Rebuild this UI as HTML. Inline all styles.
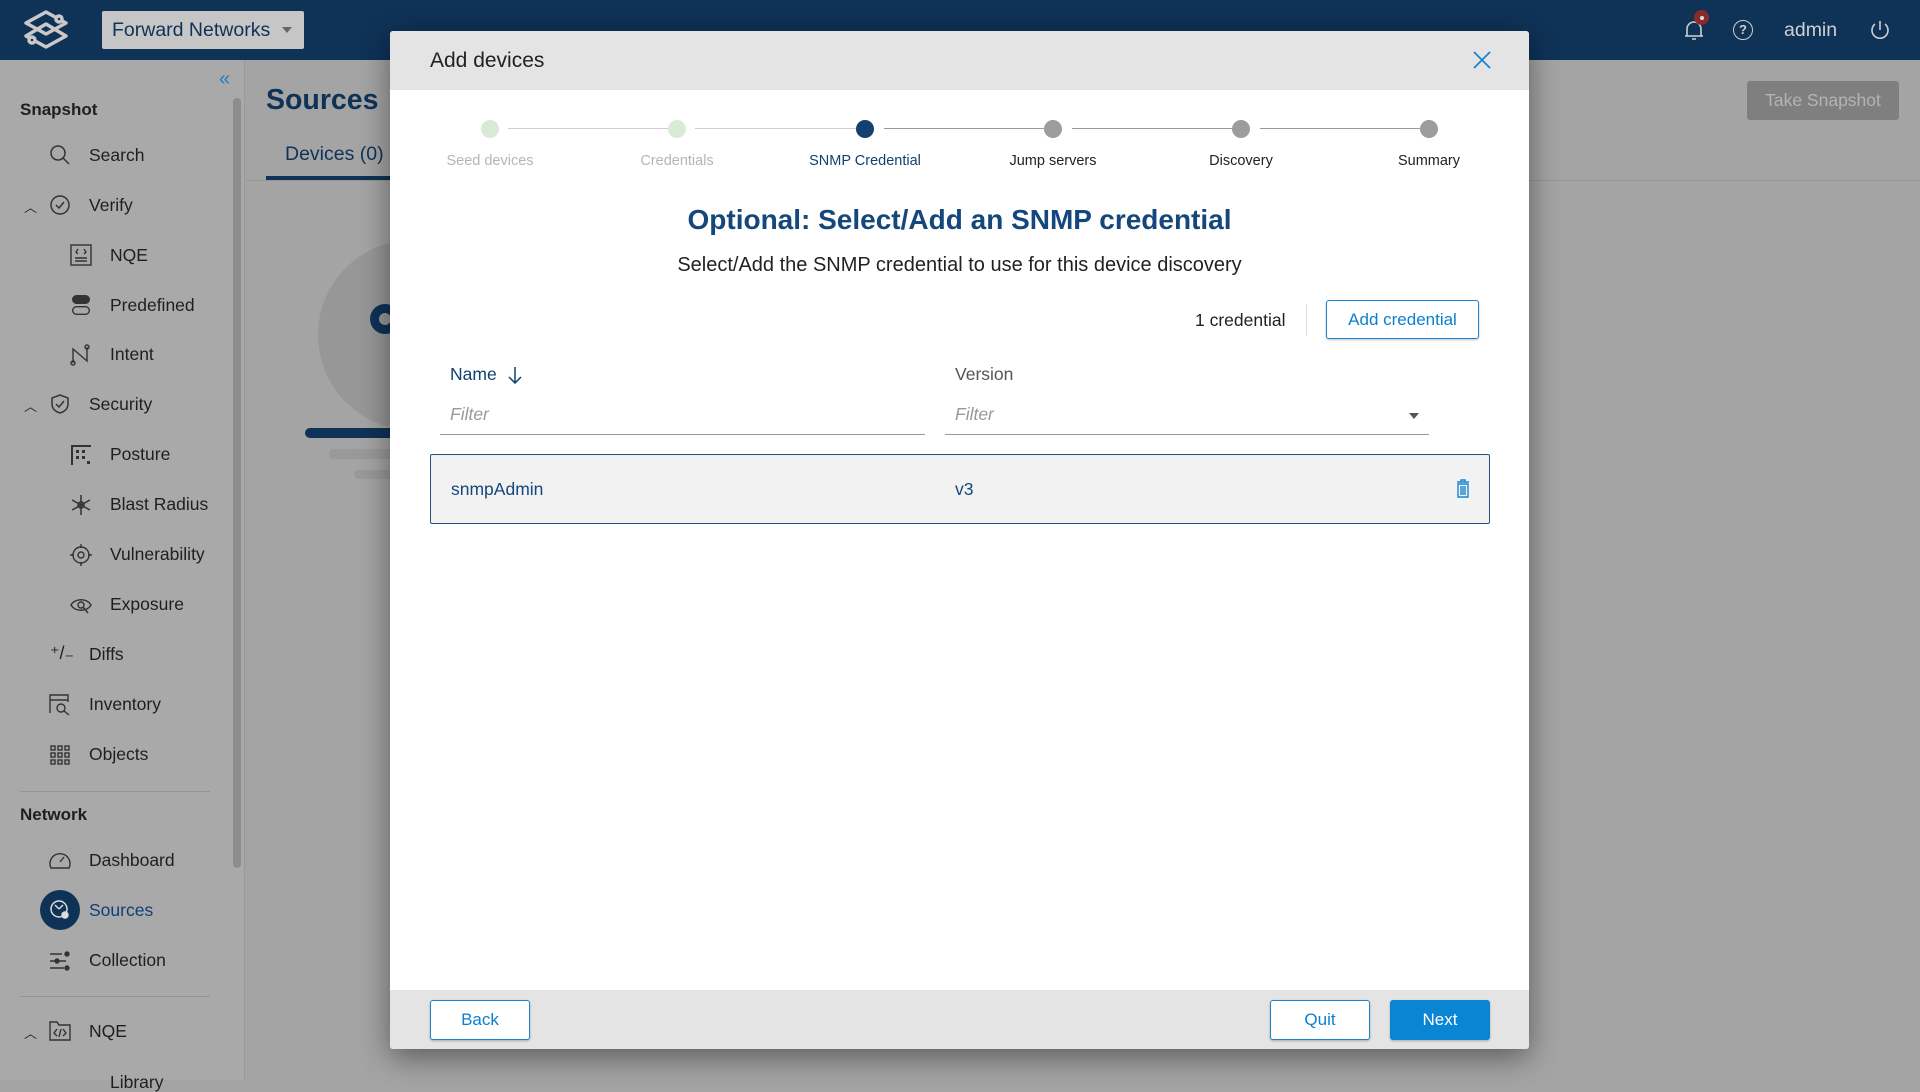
<!DOCTYPE html>
<html><head><meta charset="utf-8">
<style>
*{box-sizing:border-box;margin:0;padding:0}
body{width:1920px;height:1080px;overflow:hidden;font-family:"Liberation Sans",sans-serif;background:#a4a4a4;position:relative}
.abs{position:absolute}
#top{left:0;top:0;width:1920px;height:60px;background:#0f3257}
#side{left:0;top:60px;width:245px;height:1020px;background:#a9a9a9;border-right:1px solid #9a9a9a}
.si{position:absolute;font-size:17.5px;color:#1f1f1f;line-height:20px}
.hd{font-weight:bold;font-size:17px}
.ic{position:absolute;width:22px;height:22px}
.modal{left:390px;top:31px;width:1139px;height:1018px;background:#fff;border-radius:3px;box-shadow:0 8px 30px rgba(0,0,0,.45);overflow:hidden}
.step{position:absolute;top:89px;width:18px;height:18px;border-radius:50%}
.lbl{position:absolute;top:122px;font-size:14.5px;width:160px;text-align:center;margin-left:-80px}
.ln{position:absolute;top:97px;height:1px;background:#cfcfcf}
.btn{position:absolute;border:1px solid #1a84d0;border-radius:3px;background:#fff;color:#0b7fd0;font-size:17px;text-align:center;box-shadow:0 1px 2px rgba(0,0,0,.25)}
</style></head><body>
<div id="top" class="abs">
 <svg class="abs" style="left:20px;top:9px" width="52" height="42" viewBox="0 0 52 42" fill="none" stroke="#c9c9c9" stroke-width="3.5" stroke-linejoin="round">
  <path d="M26 3 L46 14 L26 25 L6 14 Z"/><path d="M26 15 L46 27 L26 38 L6 27 Z"/>
  <circle cx="39" cy="10" r="3" fill="#0f3257"/><circle cx="12" cy="31" r="3" fill="#0f3257"/>
 </svg>
 <div class="abs" style="left:102px;top:11px;width:202px;height:38px;background:#c6c6c6;border-radius:2px;color:#0f3257;font-size:19.5px;line-height:38px;padding-left:10px">Forward Networks<span style="position:absolute;right:12px;top:16px;border-left:5px solid transparent;border-right:5px solid transparent;border-top:6px solid #666"></span></div>
 <svg class="abs" style="left:1682px;top:17px" width="24" height="26" viewBox="0 0 24 26" fill="none" stroke="#cfcfcf" stroke-width="1.6"><path d="M5 19 V12 a7 7 0 0 1 14 0 V19 Z M3 19 H21 M10 22 H14"/></svg>
 <div class="abs" style="left:1694px;top:10px;width:15px;height:15px;border-radius:50%;background:#8a2a2a"><div style="width:4px;height:4px;background:#ddd;border-radius:50%;margin:5.5px auto"></div></div>
 <div class="abs" style="left:1733px;top:20px;width:20px;height:20px;border:1.6px solid #cfcfcf;border-radius:50%;color:#cfcfcf;font-size:13px;text-align:center;line-height:17px;font-weight:bold">?</div>
 <div class="abs" style="left:1784px;top:19px;color:#cfcfcf;font-size:19.5px">admin</div>
 <svg class="abs" style="left:1869px;top:19px" width="22" height="22" viewBox="0 0 22 22" fill="none" stroke="#cfcfcf" stroke-width="1.6"><path d="M11 2 V11"/><path d="M6 5 A8 8 0 1 0 16 5"/></svg>
</div>

<div id="side" class="abs">
 <div class="abs" style="left:219px;top:8px;color:#1f7fc6;font-size:20px">«</div>
 <div class="abs" style="left:233px;top:38px;width:8px;height:770px;background:#8d8d8d;border-radius:4px"></div>
 <div class="si hd" style="left:20px;top:40px">Snapshot</div>
 <div class="si" style="left:89px;top:85px">Search</div>
 <div class="si" style="left:89px;top:135px">Verify</div>
 <div class="si" style="left:110px;top:185px">NQE</div>
 <div class="si" style="left:110px;top:235px">Predefined</div>
 <div class="si" style="left:110px;top:284px">Intent</div>
 <div class="si" style="left:89px;top:334px">Security</div>
 <div class="si" style="left:110px;top:384px">Posture</div>
 <div class="si" style="left:110px;top:434px">Blast Radius</div>
 <div class="si" style="left:110px;top:484px">Vulnerability</div>
 <div class="si" style="left:110px;top:534px">Exposure</div>
 <div class="si" style="left:89px;top:584px">Diffs</div>
 <div class="si" style="left:89px;top:634px">Inventory</div>
 <div class="si" style="left:89px;top:684px">Objects</div>
 <div class="abs" style="left:20px;top:731px;width:190px;height:1px;background:#959595"></div>
 <div class="si hd" style="left:20px;top:745px">Network</div>
 <div class="si" style="left:89px;top:790px">Dashboard</div>
 <div class="abs" style="left:40px;top:830px;width:40px;height:40px;border-radius:50%;background:#0f3257"></div>
 <div class="si" style="left:89px;top:840px;color:#0f3f78">Sources</div>
 <div class="si" style="left:89px;top:890px">Collection</div>
 <div class="abs" style="left:20px;top:936px;width:190px;height:1px;background:#959595"></div>
 <div class="si" style="left:89px;top:961px">NQE</div>
 <div class="si" style="left:110px;top:1012px">Library</div>
 <div class="si" style="left:24px;top:138px;font-size:13px">︿</div>
 <div class="si" style="left:24px;top:337px;font-size:13px">︿</div>
 <div class="si" style="left:24px;top:964px;font-size:13px">︿</div>
 <svg class="ic" style="left:49px;top:84px" viewBox="0 0 22 22" fill="none" stroke="#333" stroke-width="1.5"><circle cx="9" cy="9" r="7"/><path d="M14 14 L20 20"/></svg>
 <svg class="ic" style="left:49px;top:134px" viewBox="0 0 22 22" fill="none" stroke="#333" stroke-width="1.5"><circle cx="11" cy="11" r="9"/><path d="M7 11 L10 14 L15 8"/></svg>
 <svg class="ic" style="left:70px;top:184px" viewBox="0 0 22 22" fill="none" stroke="#333" stroke-width="1.4"><rect x="1" y="1" width="20" height="20"/><path d="M5 14H17M5 17H17M8 5L6 8L8 10M14 5L16 8L14 10"/></svg>
 <svg class="ic" style="left:70px;top:234px" viewBox="0 0 22 22" fill="#333"><rect x="2" y="1" width="18" height="9" rx="4.5"/><rect x="2.7" y="12.7" width="16.6" height="7.6" rx="3.8" fill="none" stroke="#333" stroke-width="1.4"/></svg>
 <svg class="ic" style="left:70px;top:284px" viewBox="0 0 22 22" fill="none" stroke="#333" stroke-width="1.4"><path d="M3 19 V5 L17 17 V3"/><circle cx="3" cy="19" r="2"/><circle cx="17" cy="3" r="2"/></svg>
 <svg class="ic" style="left:49px;top:333px" viewBox="0 0 22 22" fill="none" stroke="#333" stroke-width="1.5"><path d="M11 2 L19 5 V11 C19 16 15 19 11 20 C7 19 3 16 3 11 V5 Z"/><path d="M7 11 L10 14 L15 8"/></svg>
 <svg class="ic" style="left:70px;top:384px" viewBox="0 0 22 22" fill="#333"><path d="M1 1h20v2H1zM1 1h2v20H1z"/><rect x="6" y="6" width="3" height="3"/><rect x="12" y="6" width="3" height="3"/><rect x="6" y="12" width="3" height="3"/><rect x="12" y="12" width="3" height="3"/><rect x="17" y="17" width="3" height="3"/></svg>
 <svg class="ic" style="left:70px;top:434px" viewBox="0 0 22 22" fill="none" stroke="#333" stroke-width="1.5"><path d="M11 1V21M2 6L20 16M2 16L20 6"/><circle cx="11" cy="11" r="3"/></svg>
 <svg class="ic" style="left:70px;top:484px" viewBox="0 0 22 22" fill="none" stroke="#333" stroke-width="1.4"><circle cx="11" cy="11" r="8"/><circle cx="11" cy="11" r="3"/><path d="M11 0V4M11 18V22M0 11H4M18 11H22"/></svg>
 <svg class="ic" style="left:70px;top:534px" viewBox="0 0 22 22" fill="none" stroke="#333" stroke-width="1.4"><path d="M1 11 C5 4 17 4 21 11 C17 18 5 18 1 11Z"/><circle cx="11" cy="11" r="3"/><path d="M13 13L18 19"/></svg>
 <div class="si" style="left:50px;top:583px;font-size:18px">⁺/₋</div>
 <svg class="ic" style="left:49px;top:634px" viewBox="0 0 22 22" fill="none" stroke="#333" stroke-width="1.4"><path d="M1 19V1H19V8M1 6H19"/><circle cx="12" cy="14" r="4"/><path d="M15 17L20 21"/></svg>
 <svg class="ic" style="left:49px;top:684px" viewBox="0 0 22 22" fill="none" stroke="#333" stroke-width="1.4"><rect x="2" y="2" width="4" height="4"/><rect x="9" y="2" width="4" height="4"/><rect x="16" y="2" width="4" height="4"/><rect x="2" y="9" width="4" height="4"/><rect x="9" y="9" width="4" height="4"/><rect x="16" y="9" width="4" height="4"/><rect x="2" y="16" width="4" height="4"/><rect x="9" y="16" width="4" height="4"/><rect x="16" y="16" width="4" height="4"/></svg>
 <svg class="ic" style="left:49px;top:790px" viewBox="0 0 22 22" fill="none" stroke="#333" stroke-width="1.4"><path d="M2 18 A10 10 0 1 1 20 18 Z"/><path d="M11 12L15 7"/></svg>
 <svg class="ic" style="left:49px;top:839px" viewBox="0 0 22 22" fill="none" stroke="#ddd" stroke-width="1.5"><circle cx="10" cy="10" r="8"/><circle cx="16" cy="16" r="3" fill="#ddd"/><path d="M6 6L10 10M14 6L10 10"/></svg>
 <svg class="ic" style="left:49px;top:890px" viewBox="0 0 22 22" fill="#333" stroke="#333" stroke-width="1.4"><path d="M1 4H13M1 11H17M1 18H15"/><circle cx="18" cy="4" r="2"/><circle cx="8" cy="11" r="2"/><circle cx="18" cy="18" r="2"/></svg>
 <svg class="ic" style="left:49px;top:960px" viewBox="0 0 22 22" fill="none" stroke="#333" stroke-width="1.4"><path d="M1 2H8L10 5H21V20H1Z"/><path d="M8 9L5 13L8 16M14 9L17 13L14 16M12 9L10 17"/></svg>
</div>

<div class="abs" style="left:266px;top:84px;font-size:28.5px;font-weight:bold;color:#0f3257">Sources</div>
<div class="abs" style="left:285px;top:143px;font-size:19.5px;color:#0f3257">Devices (0)</div>
<div class="abs" style="left:266px;top:176px;width:130px;height:5px;background:#0f3257"></div>
<div class="abs" style="left:246px;top:180px;width:1674px;height:1px;background:#959595"></div>
<div class="abs" style="left:318px;top:240px;width:190px;height:190px;border-radius:50%;background:#979797"></div>
<div class="abs" style="left:370px;top:304px;width:30px;height:30px;border-radius:50%;border:9px solid #0f3257"></div>
<div class="abs" style="left:305px;top:428px;width:100px;height:10px;border-radius:5px;background:#0f3257"></div>
<div class="abs" style="left:329px;top:449px;width:80px;height:10px;border-radius:5px;background:#999"></div>
<div class="abs" style="left:354px;top:470px;width:60px;height:9px;border-radius:5px;background:#999"></div>
<div class="abs" style="left:1747px;top:81px;width:152px;height:39px;background:#7f7f7f;border-radius:3px;color:#b4b4b4;font-size:17.5px;text-align:center;line-height:39px">Take Snapshot</div>

<div class="abs modal">
 <div class="abs" style="left:0;top:0;width:1139px;height:59px;background:#e4e4e4"></div>
 <div class="abs" style="left:40px;top:18px;font-size:21px;color:#222">Add devices</div>
 <svg class="abs" style="left:1083px;top:20px" width="18" height="18" viewBox="0 0 18 18" stroke="#1a84d0" stroke-width="1.8"><path d="M1 1L17 17M17 1L1 17"/></svg>

 <div class="ln" style="left:118px;width:168px"></div>
 <div class="ln" style="left:305px;width:170px"></div>
 <div class="ln" style="left:494px;width:168px;background:#9a9a9a"></div>
 <div class="ln" style="left:682px;width:168px;background:#9a9a9a"></div>
 <div class="ln" style="left:870px;width:168px;background:#9a9a9a"></div>
 <div class="step" style="left:91px;background:#d8ebd4"></div>
 <div class="step" style="left:278px;background:#d8ebd4"></div>
 <div class="step" style="left:466px;background:#12406f"></div>
 <div class="step" style="left:654px;background:#9c9c9c"></div>
 <div class="step" style="left:842px;background:#9c9c9c"></div>
 <div class="step" style="left:1030px;background:#9c9c9c"></div>
 <div class="lbl" style="left:100px;color:#b5b5b5">Seed devices</div>
 <div class="lbl" style="left:287px;color:#b5b5b5">Credentials</div>
 <div class="lbl" style="left:475px;color:#12406f">SNMP Credential</div>
 <div class="lbl" style="left:663px;color:#222">Jump servers</div>
 <div class="lbl" style="left:851px;color:#222">Discovery</div>
 <div class="lbl" style="left:1039px;color:#222">Summary</div>

 <div class="abs" style="left:0;width:1139px;top:173px;text-align:center;font-size:28px;font-weight:bold;color:#14477b">Optional: Select/Add an SNMP credential</div>
 <div class="abs" style="left:0;width:1139px;top:223px;text-align:center;font-size:20px;color:#222">Select/Add the SNMP credential to use for this device discovery</div>

 <div class="abs" style="left:805px;top:279px;font-size:17.5px;color:#222">1 credential</div>
 <div class="abs" style="left:916px;top:273px;width:1px;height:32px;background:#ddd"></div>
 <div class="btn" style="left:936px;top:269px;width:153px;height:39px;line-height:37px">Add credential</div>

 <div class="abs" style="left:60px;top:333px;font-size:17.5px;color:#12406f">Name</div>
 <svg class="abs" style="left:118px;top:335px" width="14" height="18" viewBox="0 0 14 18" fill="none" stroke="#12406f" stroke-width="1.5"><path d="M7 1V17M1 11L7 17L13 11"/></svg>
 <div class="abs" style="left:565px;top:333px;font-size:17.5px;color:#555">Version</div>
 <div class="abs" style="left:60px;top:373px;font-size:17.5px;color:#999;font-style:italic">Filter</div>
 <div class="abs" style="left:50px;top:403px;width:485px;height:1px;background:#999"></div>
 <div class="abs" style="left:565px;top:373px;font-size:17.5px;color:#999;font-style:italic">Filter</div>
 <div class="abs" style="left:1019px;top:382px;border-left:5px solid transparent;border-right:5px solid transparent;border-top:6px solid #555"></div>
 <div class="abs" style="left:555px;top:403px;width:484px;height:1px;background:#999"></div>

 <div class="abs" style="left:40px;top:423px;width:1060px;height:70px;background:#f2f2f2;border:1px solid #2a4f7e;border-radius:2px"></div>
 <div class="abs" style="left:61px;top:448px;font-size:17.5px;color:#14477b">snmpAdmin</div>
 <div class="abs" style="left:565px;top:448px;font-size:17.5px;color:#14477b">v3</div>
 <svg class="abs" style="left:1066px;top:448px" width="14" height="19" viewBox="0 0 14 19" fill="none" stroke="#1a84d0" stroke-width="1.4"><path d="M1 3H13M5 3V1H9V3M2 5H12V18H2Z M5 7V16M7 7V16M9 7V16"/></svg>

 <div class="abs" style="left:0;top:959px;width:1139px;height:59px;background:#e4e4e4"></div>
 <div class="btn" style="left:40px;top:969px;width:100px;height:40px;line-height:38px">Back</div>
 <div class="btn" style="left:880px;top:969px;width:100px;height:40px;line-height:38px">Quit</div>
 <div class="btn" style="left:1000px;top:969px;width:100px;height:40px;line-height:38px;background:#0a85d3;color:#fff;border-color:#0a85d3">Next</div>
</div>
</body></html>
